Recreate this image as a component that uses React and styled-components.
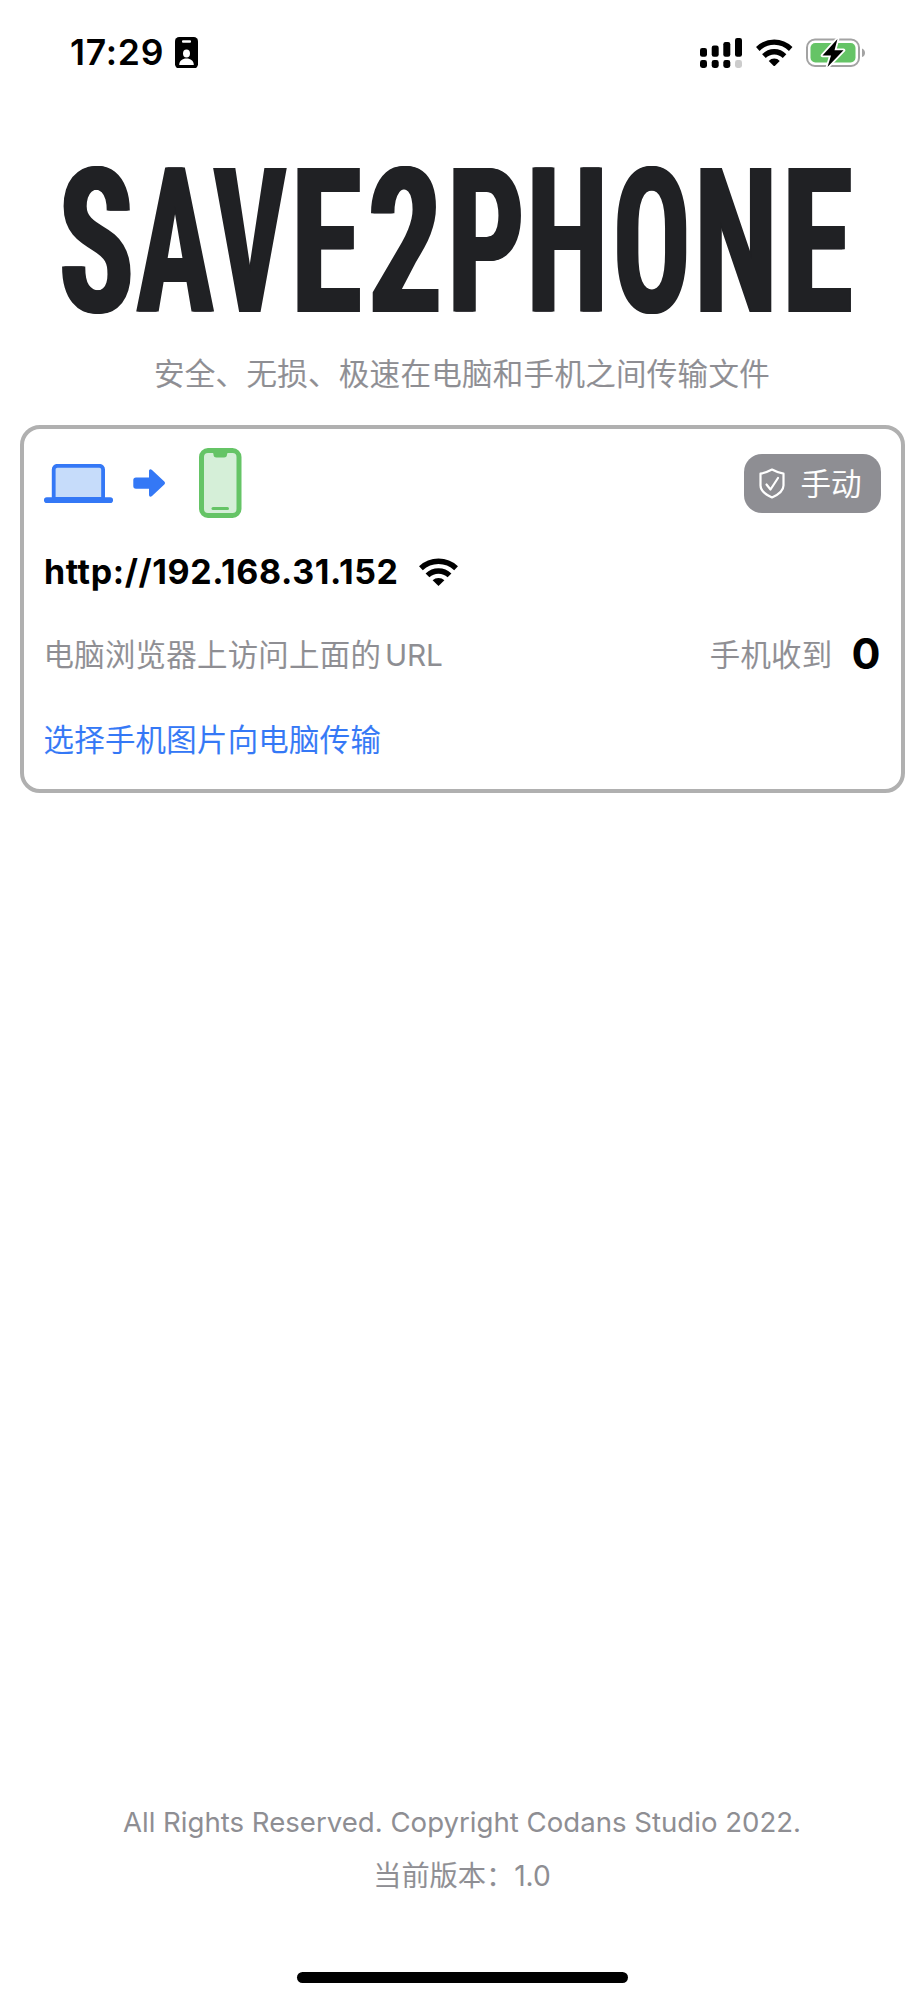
import React from "react";
import styled, { createGlobalStyle, css } from "styled-components";

const GRAY = "#8e8e93";
const BLUE = "#3478f6";
const GREEN = "#65c466";

const Global = createGlobalStyle`
  *, *::before, *::after { box-sizing: border-box; }
  body { margin: 0; background: #fff; }
`;

const Screen = styled.main`
  display: flex;
  flex-direction: column;
  width: 924px;
  height: 2000px;
  overflow: hidden;
  background: #fff;
  color: #000;
  font-family: "Inter", "Noto Sans CJK SC", sans-serif;
`;

const StatusBar = styled.header`
  display: flex;
  justify-content: space-between;
  height: 105px;
  padding: 0 58px 0 70px;
`;

const StatusLeft = styled.div`
  display: flex;
  align-items: center;
  gap: 11px;
`;

const StatusRight = styled.div`
  display: flex;
  align-items: center;
`;

const Clock = styled.time`
  font-size: 35.5px;
  font-weight: 600;
  letter-spacing: 0.75px;
  line-height: 105px;
`;

const Icon = styled.svg`
  display: block;
  flex: none;
  width: ${(p) => p.$w}px;
  height: ${(p) => p.$h}px;
  margin-left: ${(p) => p.$gap || 0}px;
`;

const Wordmark = styled.h1`
  display: flex;
  align-items: flex-start;
  height: 240px;
  margin: 0;
  padding: 18px 0 0 62px;
  color: #202124;
  font-family: "Roboto", sans-serif;
  font-size: 202px;
  font-weight: 700;
  font-stretch: 75%;
  line-height: 240px;
`;

const SPREAD = 1.4;

/* Each letter is condensed to its own width and thickened sideways. */
const Letter = styled.span`
  flex: none;
  width: 0;
  margin-right: ${(p) => p.$step}px;
  ${({ $ink, $width }) => {
    const k = ($width - 2 * SPREAD) / ($ink[1] - $ink[0]);
    const s = SPREAD / k;
    return css`
      transform: translateX(${SPREAD - $ink[0] * k}px) scaleX(${k});
      text-shadow: ${s}px 0, ${-s}px 0;
    `;
  }}
  transform-origin: 0 0;
`;

const LETTERS = [
  { char: "S", ink: [7, 102], width: 69, step: 74.3 },
  { char: "A", ink: [2, 119], width: 78.3, step: 76.8 },
  { char: "V", ink: [2, 115], width: 74, step: 84 },
  { char: "E", ink: [11, 94], width: 63, step: 73.7 },
  { char: "2", ink: [7, 94], width: 67.5, step: 82.4 },
  { char: "P", ink: [11, 108], width: 68.6, step: 79.2 },
  { char: "H", ink: [11, 113], width: 70.5, step: 84.2 },
  { char: "O", ink: [9, 113], width: 69.5, step: 83.7 },
  { char: "N", ink: [11, 113], width: 72, step: 87.4 },
  { char: "E", ink: [11, 94], width: 63, step: 0 },
];

const Tagline = styled.p`
  margin: 0;
  height: 58px;
  color: ${GRAY};
  font-size: 30.5px;
  font-weight: 350;
  letter-spacing: 0.3px;
  line-height: 58px;
  text-align: center;
  -webkit-text-stroke: 0.2px;
`;

const Card = styled.section`
  display: flex;
  flex-direction: column;
  width: 885px;
  height: 368px;
  margin: 22px 0 0 19.5px;
  padding: 15px 20px 0;
  border: 4px solid #b0b0b0;
  border-radius: 20px;
`;

const Row = styled.div`
  display: flex;
  align-items: center;
  height: ${(p) => p.$h}px;
`;

const ModeButton = styled.button`
  display: flex;
  align-items: center;
  width: 137px;
  height: 59px;
  margin: 0 0 0 auto;
  padding: 0 0 0 15px;
  border: 0;
  border-radius: 18px;
  background: ${GRAY};
  color: #fff;
  font: 350 30.5px/59px "Inter", "Noto Sans CJK SC", sans-serif;
  gap: 16px;
  -webkit-text-stroke: 0.2px;
`;

const Address = styled.span`
  padding-left: 0.5px;
  font-size: 34px;
  font-weight: 700;
  letter-spacing: 0.6px;
`;

const Text = styled.span`
  color: ${(p) => p.$color};
  font-size: 30.4px;
  font-weight: 350;
  letter-spacing: 0.3px;
  -webkit-text-stroke: 0.2px;
`;

const Latin = styled.span`
  margin-left: 4px;
  font-size: 29.8px;
  font-weight: 400;
  letter-spacing: -0.2px;
  -webkit-text-stroke: 0;
`;

const Received = styled.div`
  display: flex;
  align-items: center;
  margin-left: auto;
  gap: 19px;
`;

const Count = styled.strong`
  font-size: 43px;
  font-weight: 700;
`;

const Footer = styled.footer`
  display: flex;
  flex-direction: column;
  align-items: center;
  margin-top: auto;
  color: ${GRAY};
  font-size: 27.6px;
  line-height: 54px;
`;

const Version = styled.span`
  font-size: 28.2px;
  font-weight: 400;
`;

const VersionLabel = styled.span`
  font-weight: 350;
  -webkit-text-stroke: 0.2px;
`;

const HomeIndicator = styled.div`
  width: 331px;
  height: 11px;
  margin: 69px 0 17.5px;
  border-radius: 6px;
  background: #000;
`;

function Wifi({ w, h, gap }) {
  return (
    <Icon $w={w} $h={h} $gap={gap} viewBox="0 0 38.6 28" preserveAspectRatio="none">
      <g fill="none" stroke="#000" strokeWidth="5.4">
        <path d="M1.9 10.200a25.200 25.200 0 0 1 34.800 0" />
        <path d="M8.400 17.400a15.600 15.600 0 0 1 21.800 0" />
      </g>
      <path d="M19.300 28l-5.800-5.700a8.200 8.200 0 0 1 11.600 0z" />
    </Icon>
  );
}

export default function App() {
  return (
    <Screen>
      <Global />
      <StatusBar>
        <StatusLeft>
          <Clock>17:29</Clock>
          <Icon $w={23} $h={31.5} viewBox="0 0 23 31.5">
            <rect width="23" height="31.5" rx="4.2" />
            <rect x="7" y="3.2" width="9" height="2.6" rx="1" fill="#fff" />
            <ellipse cx="11.5" cy="16.4" rx="3.5" ry="4" fill="#fff" />
            <path d="M4.2 28c0-4.4 3.2-6.6 7.3-6.6s7.3 2.2 7.3 6.6z" fill="#fff" />
          </Icon>
        </StatusLeft>
        <StatusRight>
          <Icon $w={42} $h={30} viewBox="0 0 42 30">
            <rect y="10" width="7" height="8.7" rx="2.2" />
            <rect x="11.7" y="7.6" width="7" height="11.1" rx="2.2" />
            <rect x="23.3" y="4" width="7" height="14.7" rx="2.2" />
            <rect x="35" y="0" width="7" height="18.7" rx="2.2" />
            <rect y="22" width="7" height="8" rx="2.4" />
            <rect x="11.7" y="22" width="7" height="8" rx="2.4" />
            <rect x="23.3" y="22" width="7" height="8" rx="2.4" />
            <rect x="35" y="22" width="7" height="8" rx="2.4" fill="#ccc" />
          </Icon>
          <Wifi w={36.5} h={27.5} gap={14.3} />
          <Icon $w={60} $h={30} $gap={13.5} viewBox="0 0 60 30">
            <rect x="1" y="1.5" width="52" height="26.5" rx="8" fill="#fff" stroke="#a3a3a3" strokeWidth="2" />
            <rect x="4.5" y="5" width="45" height="19.5" rx="4.8" fill={GREEN} />
            <path d="M56 10.5c4 1.5 4 7.3 0 8.6z" fill="#a3a3a3" />
            <path d="M31.5 1L16.5 17.5h8.5L21.5 29 37.5 12.3h-9z" fill="#000" stroke="#fff" strokeWidth="3.6" strokeLinejoin="round" paintOrder="stroke" />
          </Icon>
        </StatusRight>
      </StatusBar>

      <Wordmark>
        {LETTERS.map((l, i) => (
          <Letter key={i} $ink={l.ink} $width={l.width} $step={l.step}>{l.char}</Letter>
        ))}
      </Wordmark>
      <Tagline>安全、无损、极速在电脑和手机之间传输文件</Tagline>

      <Card>
        <Row $h={79}>
          <Icon $w={69} $h={39} viewBox="0 0 69 39">
            <path d="M9.7 35V5.5a3.7 3.7 0 0 1 3.7-3.7h42a3.7 3.7 0 0 1 3.700 3.700V35z" fill="#c6dcfa" stroke={BLUE} strokeWidth="3.8" />
            <rect y="33.3" width="69" height="5.7" rx="2.8" fill={BLUE} />
          </Icon>
          <Icon $w={33} $h={28} $gap={20.5} viewBox="0 0 33 28">
            <path d="M3 8.500h13V2.200C16 .3 17.600-.3 19 1l12.300 11.500q1.400 1.500 0 3L19 27c-1.400 1.300-3 .7-3-1.200v-6H3q-2.700 0-2.700-2.700v-6q0-2.600 2.700-2.600z" fill={BLUE} />
          </Icon>
          <Icon $w={42.5} $h={70} $gap={33} viewBox="0 0 42.5 70">
            <rect x="2.5" y="2.5" width="37.5" height="65" rx="6.5" fill="#d5efd8" stroke={GREEN} strokeWidth="5" />
            <path d="M13 4h17q-2 .5-2 2.500 0 3-3 3h-7.500q-3 0-3-3 0-2-1.500-2.500z" fill={GREEN} />
            <rect x="12.5" y="59" width="17.5" height="3" rx="1.5" fill={GREEN} />
          </Icon>
          <ModeButton>
            <Icon $w={26} $h={31} viewBox="0 0 26 31" fill="none" stroke="#fff" strokeWidth="2.2" strokeLinecap="round" strokeLinejoin="round">
              <path d="M13 1.500q5.500 3 11.500 4.200v11.800c0 6-5.500 9.300-11.500 12-6-2.700-11.500-6-11.500-12V5.700Q7.500 4.500 13 1.500z" />
              <path d="M7.500 16.500l4 5L19 10" />
            </Icon>
            手动
          </ModeButton>
        </Row>
        <Row $h={98}>
          <Address>http://192.168.31.152</Address>
          <Wifi w={39} h={28} gap={20.5} />
        </Row>
        <Row $h={66}>
          <Text $color={GRAY}>
            电脑浏览器上访问上面的<Latin>URL</Latin>
          </Text>
          <Received>
            <Text $color={GRAY}>手机收到</Text>
            <Count>0</Count>
          </Received>
        </Row>
        <Row $h={103}>
          <Text $color={BLUE}>选择手机图片向电脑传输</Text>
        </Row>
      </Card>

      <Footer>
        <span>All Rights Reserved. Copyright Codans Studio 2022.</span>
        <Version>
          <VersionLabel>当前版本：</VersionLabel>1.0
        </Version>
        <HomeIndicator />
      </Footer>
    </Screen>
  );
}
